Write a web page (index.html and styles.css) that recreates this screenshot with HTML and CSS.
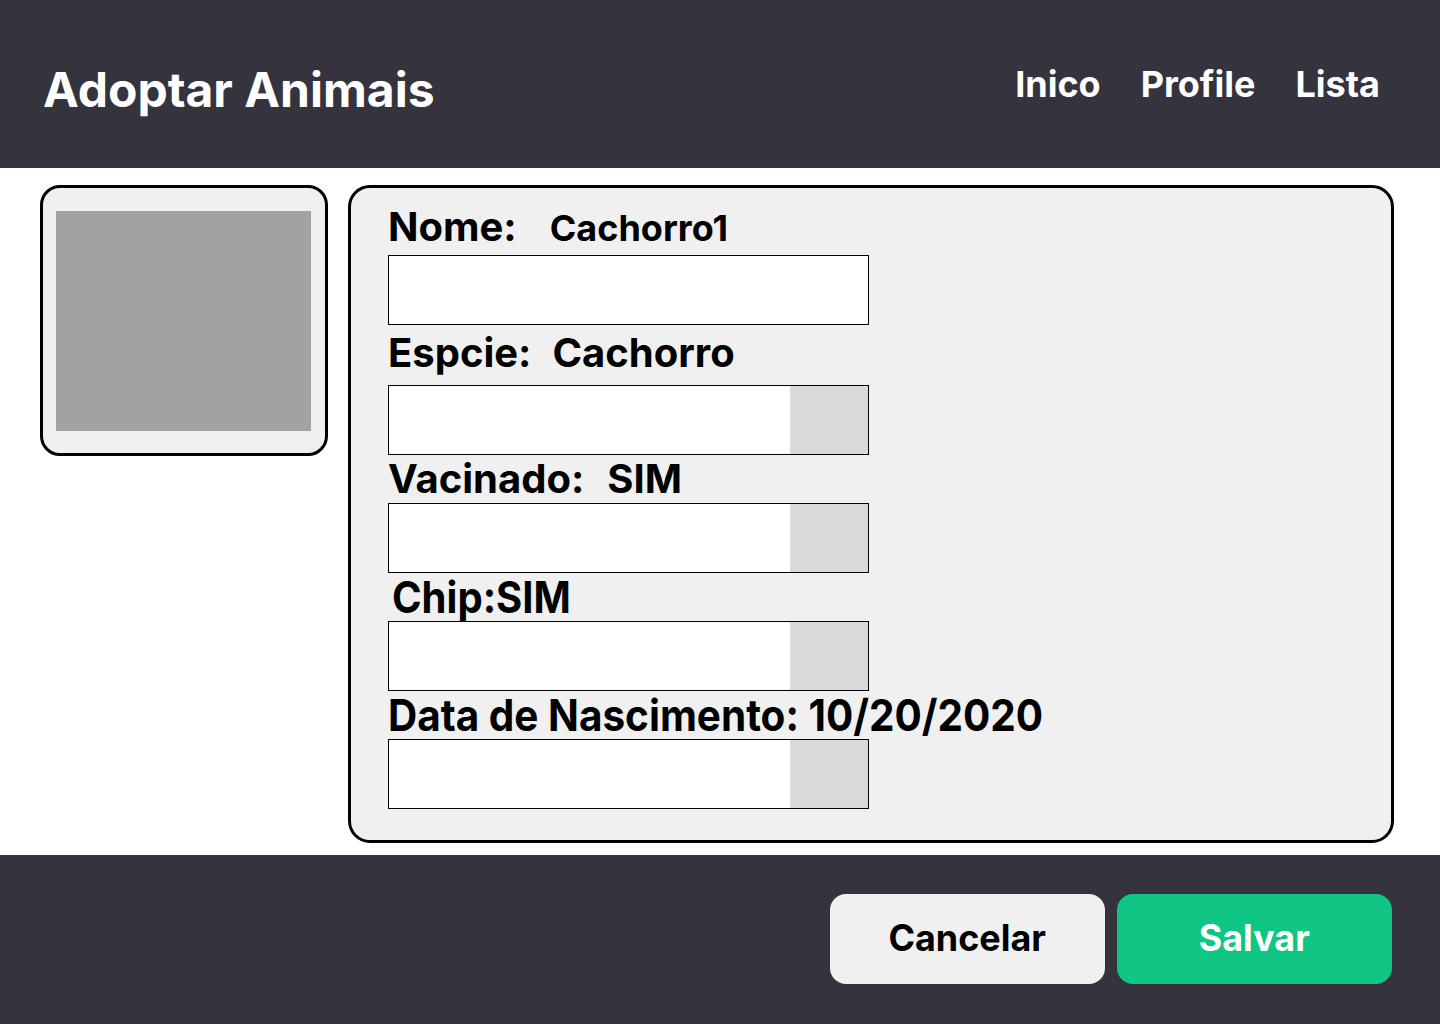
FILE: index.html
```html
<!DOCTYPE html>
<html lang="pt">
<head>
<meta charset="utf-8">
<title>Adoptar Animais</title>
<link rel="stylesheet" href="styles.css">
</head>
<body>
<header class="topbar">
  <h1 class="brand">Adoptar Animais</h1>
  <nav class="nav">
    <a class="nav-link" href="#">Inico</a>
    <a class="nav-link" href="#">Profile</a>
    <a class="nav-link" href="#">Lista</a>
  </nav>
</header>
<main class="content">
  <section class="photo-card">
    <div class="photo"></div>
  </section>
  <section class="form-card">
    <div class="field field-first">
      <div class="label label-nome"><span class="key">Nome:</span><span class="val val-small">Cachorro1</span></div>
      <div class="input"></div>
    </div>
    <div class="field field-especie">
      <div class="label"><span class="key">Espcie:</span><span class="val val-esp">Cachorro</span></div>
      <div class="input select"><span class="select-btn"></span></div>
    </div>
    <div class="field">
      <div class="label"><span class="key">Vacinado:</span><span class="val val-vac">SIM</span></div>
      <div class="input select"><span class="select-btn"></span></div>
    </div>
    <div class="field">
      <div class="label label-chip"><span class="cond cond-chip">Chip:SIM</span></div>
      <div class="input select"><span class="select-btn"></span></div>
    </div>
    <div class="field">
      <div class="label"><span class="cond cond-data">Data de Nascimento: 10/20/2020</span></div>
      <div class="input select"><span class="select-btn"></span></div>
    </div>
  </section>
</main>
<footer class="bottombar">
  <button class="btn btn-cancel" type="button"><span class="btn-text">Cancelar</span></button>
  <button class="btn btn-save" type="button"><span class="btn-text">Salvar</span></button>
</footer>
</body>
</html>
```

FILE: styles.css
```css
* { box-sizing: border-box; }
html, body { margin: 0; padding: 0; }
body {
  width: 1440px;
  height: 1024px;
  font-family: Inter, "Noto Sans", sans-serif;
  background: #ffffff;
  color: #000;
  display: flex;
  flex-direction: column;
}
.topbar {
  height: 168px;
  background: #35333d;
  display: flex;
  align-items: center;
  justify-content: space-between;
  padding: 0 60px 0 43px;
}
.brand {
  margin: 0;
  color: #fff;
  font-size: 48px;
  font-weight: 700;
  position: relative;
  top: 5px;
}
.nav {
  display: flex;
  gap: 40px;
}
.nav-link {
  color: #fff;
  text-decoration: none;
  font-size: 36px;
  font-weight: 700;
  display: inline-block;
}
.content {
  height: 687px;
  display: flex;
  gap: 20px;
  padding: 17px 46px 12px 40px;
  align-items: flex-start;
}
.photo-card {
  width: 288px;
  height: 271px;
  border: 3px solid #000;
  border-radius: 20px;
  background: #f0f0f0;
  padding: 23px 14px 0 13px;
}
.photo {
  width: 255px;
  height: 220px;
  background: #a2a2a2;
}
.form-card {
  flex: 1;
  height: 658px;
  border: 3px solid #000;
  border-radius: 22px;
  background: #f0f0f0;
  padding: 15px 0 0 37px;
}
.field { display: flex; flex-direction: column; }
.label {
  height: 48px;
  font-size: 40px;
  font-weight: 700;
  line-height: 48px;
  white-space: nowrap;
  display: flex;
  align-items: baseline;
}
.field-first .label { height: 52px; }
.field-especie .label { height: 60px; line-height: 44px; padding-top: 6px; }
.key { display: inline-block; }
.val { display: inline-block; }
.val-small { font-size: 36px; margin-left: 33px; }
.val-esp { margin-left: 21px; }
.val-vac { margin-left: 23px; }
.label-chip { padding-left: 4px; }
.cond {
  display: inline-block;
  font-size: 44px;
  transform-origin: left center;
}
.cond-chip { transform: scaleX(0.91); }
.cond-data { transform: scaleX(0.92); }
.input {
  width: 481px;
  height: 70px;
  background: #fff;
  border: 1px solid #000;
  position: relative;
}
.select-btn {
  position: absolute;
  top: 0;
  right: 0;
  bottom: 0;
  width: 78px;
  background: #d9d9d9;
}
.bottombar {
  flex: 1;
  background: #35333d;
  display: flex;
  justify-content: flex-end;
  align-items: flex-start;
  gap: 12px;
  padding: 39px 48px 0 0;
}
.btn {
  width: 275px;
  height: 90px;
  border: none;
  border-radius: 16px;
  font-family: Inter, "Noto Sans", sans-serif;
  font-size: 37px;
  font-weight: 700;
  display: flex;
  align-items: center;
  justify-content: center;
  padding: 0;
}
.btn-text { display: inline-block; transform: scaleX(0.97); position: relative; top: -2px; }
.btn-cancel { background: #f0f0f0; color: #000; }
.btn-save { background: #10c684; color: #fff; }
```
